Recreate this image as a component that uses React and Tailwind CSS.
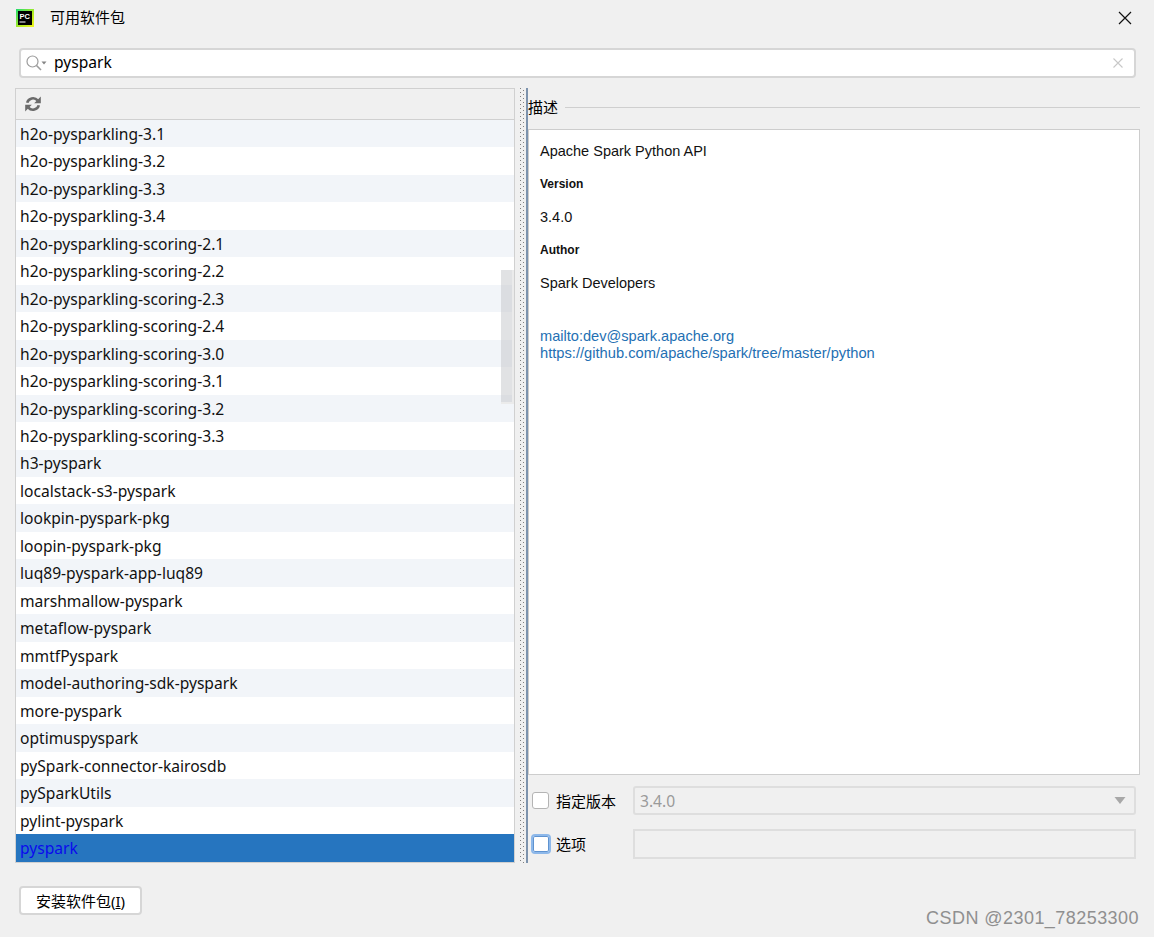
import React from "react";

const packages = [
  "h2o-pysparkling-3.1",
  "h2o-pysparkling-3.2",
  "h2o-pysparkling-3.3",
  "h2o-pysparkling-3.4",
  "h2o-pysparkling-scoring-2.1",
  "h2o-pysparkling-scoring-2.2",
  "h2o-pysparkling-scoring-2.3",
  "h2o-pysparkling-scoring-2.4",
  "h2o-pysparkling-scoring-3.0",
  "h2o-pysparkling-scoring-3.1",
  "h2o-pysparkling-scoring-3.2",
  "h2o-pysparkling-scoring-3.3",
  "h3-pyspark",
  "localstack-s3-pyspark",
  "lookpin-pyspark-pkg",
  "loopin-pyspark-pkg",
  "luq89-pyspark-app-luq89",
  "marshmallow-pyspark",
  "metaflow-pyspark",
  "mmtfPyspark",
  "model-authoring-sdk-pyspark",
  "more-pyspark",
  "optimuspyspark",
  "pySpark-connector-kairosdb",
  "pySparkUtils",
  "pylint-pyspark",
  "pyspark",
];

const cjk = "font-['Noto_Sans','Noto_Sans_CJK_SC',sans-serif]";

const PycharmLogo = () => (
  <svg width="18" height="18" viewBox="0 0 18 18" className="shrink-0">
    <defs>
      <linearGradient id="pc" x1="0" y1="0" x2="1" y2="1">
        <stop offset="0" stopColor="#1fdc70" />
        <stop offset="0.6" stopColor="#b4ec20" />
        <stop offset="1" stopColor="#f4f420" />
      </linearGradient>
    </defs>
    <rect width="18" height="18" fill="url(#pc)" />
    <rect x="2" y="2" width="14" height="14" fill="#000" />
    <text x="3.5" y="9.5" fontSize="7.5" fontWeight="700" fill="#fff" fontFamily="Liberation Sans, sans-serif">
      PC
    </text>
    <rect x="3.5" y="12.5" width="6" height="1" fill="#fff" />
  </svg>
);

const SearchIcon = () => (
  <svg width="22" height="17" viewBox="0 0 22 17" fill="none" className="shrink-0">
    <circle cx="6.5" cy="6.5" r="5.5" stroke="#9c9c9c" strokeWidth="1.2" />
    <path d="M10.5 10.5L15 15" stroke="#9c9c9c" strokeWidth="1.6" />
    <path d="M15.5 6.5h5l-2.5 3z" fill="#858585" />
  </svg>
);

const RefreshIcon = () => (
  <svg width="16" height="16" viewBox="0 0 16 16" fill="none" className="shrink-0">
    <path d="M2.2 6.8A6 6 0 0 1 12.6 4.4" stroke="#6b6b6b" strokeWidth="2.6" />
    <path d="M15.8 0.6v6.6H9.2z" fill="#6b6b6b" />
    <path d="M13.8 9.2A6 6 0 0 1 3.4 11.6" stroke="#6b6b6b" strokeWidth="2.6" />
    <path d="M0.2 15.4V8.8h6.6z" fill="#6b6b6b" />
  </svg>
);

const Checkbox = ({ focused }) =>
  focused ? (
    <div className="w-[20px] h-[20px] rounded-[4px] bg-white border-2 border-[#8db8ea] shadow-[inset_0_0_0_1px_#5f93d0]" />
  ) : (
    <div className="w-[17px] h-[17px] rounded-[3px] bg-white border border-[#b4b4b4]" />
  );

const App = () => {
  return (
    <div className={`w-[1154px] h-[937px] bg-[#f0f0f0] relative overflow-hidden flex flex-col text-black ${cjk}`}>
      {/* title bar */}
      <div className="h-[35px] pl-[16px] pr-[22px] flex items-center">
        <PycharmLogo />
        <span className="ml-[16px] text-[15px] leading-none">可用软件包</span>
        <svg width="14" height="14" viewBox="0 0 14 14" className="ml-auto" fill="none">
          <path d="M1 1l12 12M13 1L1 13" stroke="#111" strokeWidth="1.2" />
        </svg>
      </div>

      {/* search */}
      <div className="mt-[13px] ml-[19px] w-[1117px] h-[30px] bg-white border-2 border-[#d6d6d6] rounded-[4px] flex items-center pl-[5px] pr-[11px]">
        <SearchIcon />
        <span className="ml-[6px] text-[15.6px] leading-none">pyspark</span>
        <svg width="10" height="10" viewBox="0 0 10 10" className="ml-auto" fill="none">
          <path d="M0.5 0.5l9 9M9.5 0.5l-9 9" stroke="#c8c8c8" strokeWidth="1.1" />
        </svg>
      </div>

      <div className="mt-[10px] h-[775px] flex">
        {/* package list */}
        <div className="ml-[15px] w-[500px] border border-[#d0d0d0] flex flex-col relative">
          <div className="h-[30.9px] shrink-0 border-b border-[#d0d0d0] flex items-center pl-[9px] bg-[#f0f0f0]">
            <RefreshIcon />
          </div>
          <div className="bg-white flex-1">
            {packages.map((name, i) => {
              const selected = name === "pyspark";
              return (
                <div
                  key={name}
                  className={`h-[27.47px] pl-[4px] pt-[2px] flex items-center text-[15.6px] leading-none ${
                    selected
                      ? "bg-[#2675bf] text-[#0a0aee]"
                      : i % 2 === 0
                        ? "bg-[#f2f5f9] text-[#111]"
                        : "bg-white text-[#111]"
                  }`}
                >
                  {name}
                </div>
              );
            })}
          </div>
          {/* overlay scrollbar */}
          <div className="absolute left-[485px] top-[181px] w-[13px] h-[134px] bg-[#c4c6ca]/50 border-r-2 border-b-2 border-[#ebebeb]" />
        </div>

        {/* splitter */}
        <div className="w-[13px] shrink-0 flex pl-[5px]">
          <div className="w-px h-full bg-[repeating-linear-gradient(to_bottom,#808080_0,#808080_1px,transparent_1px,transparent_4px)]" />
          <div className="w-px h-full ml-[2px] mt-[2px] bg-[repeating-linear-gradient(to_bottom,#808080_0,#808080_1px,transparent_1px,transparent_4px)]" />
          <div className="w-[2px] h-full ml-[2px] bg-[#7d93ad]" />
        </div>

        {/* details */}
        <div className="w-[612px] flex flex-col">
          <div className="h-[41px] flex items-center shrink-0 pb-[3px]">
            <span className="text-[15px] leading-none">描述</span>
            <div className="ml-[7px] flex-1 h-px bg-[#cfcfcf]" />
          </div>
          <div className="h-[646px] shrink-0 bg-white border border-[#cdcdcd] pl-[11px] pt-[13px] font-['Liberation_Sans',sans-serif] text-[#111]">
            <p className="text-[14.5px] leading-[17px]">Apache Spark Python API</p>
            <p className="mt-[16px] text-[12px] leading-[17px] font-bold">Version</p>
            <p className="mt-[16px] text-[14.5px] leading-[17px]">3.4.0</p>
            <p className="mt-[16px] text-[12px] leading-[17px] font-bold">Author</p>
            <p className="mt-[16px] text-[14.5px] leading-[17px]">Spark Developers</p>
            <p className="mt-[36px] text-[14.6px] leading-[17px] text-[#2470b3]">mailto:dev@spark.apache.org</p>
            <p className="text-[14.7px] leading-[17px] text-[#2470b3]">https://github.com/apache/spark/tree/master/python</p>
          </div>
          <div className="mt-[11px] flex items-center h-[29px] text-[15px] w-[608px]">
            <div className="ml-[4px] w-[24px]">
              <Checkbox />
            </div>
            <span className="leading-none pt-[2px]">指定版本</span>
            <div className="ml-[17px] flex-1 h-[29px] border-2 border-[#dedede] rounded-[3px] flex items-center pl-[5px] pr-[8px] text-[15.6px] text-[#9a9a9a]">
              <span className="pt-[2px]">3.4.0</span>
              <svg width="12" height="7" viewBox="0 0 12 7" className="ml-auto">
                <path d="M0.5 0h11l-5.5 7z" fill="#a8a8a8" />
              </svg>
            </div>
          </div>
          <div className="mt-[14px] flex items-center h-[30px] text-[15px] w-[608px]">
            <div className="ml-[3px] w-[25px]">
              <Checkbox focused />
            </div>
            <span className="leading-none pt-[1px]">选项</span>
            <div className="ml-[47px] flex-1 h-[30px] border-2 border-[#dedede]" />
          </div>
        </div>
      </div>

      {/* footer */}
      <div className="mt-[23px] ml-[19px] w-[123px] h-[29px] pt-[1px] bg-white border-2 border-[#d6d6d6] rounded-[4px] flex items-center justify-center text-[15px] leading-none">
        安装软件包(<span className="underline">I</span>)
      </div>

      <div className="absolute right-[15px] top-[907px] text-[18px] leading-[22px] text-[#8f8f8f] font-['Liberation_Sans',sans-serif] tracking-[0.45px]">
        CSDN @2301_78253300
      </div>
    </div>
  );
};

export default App;
